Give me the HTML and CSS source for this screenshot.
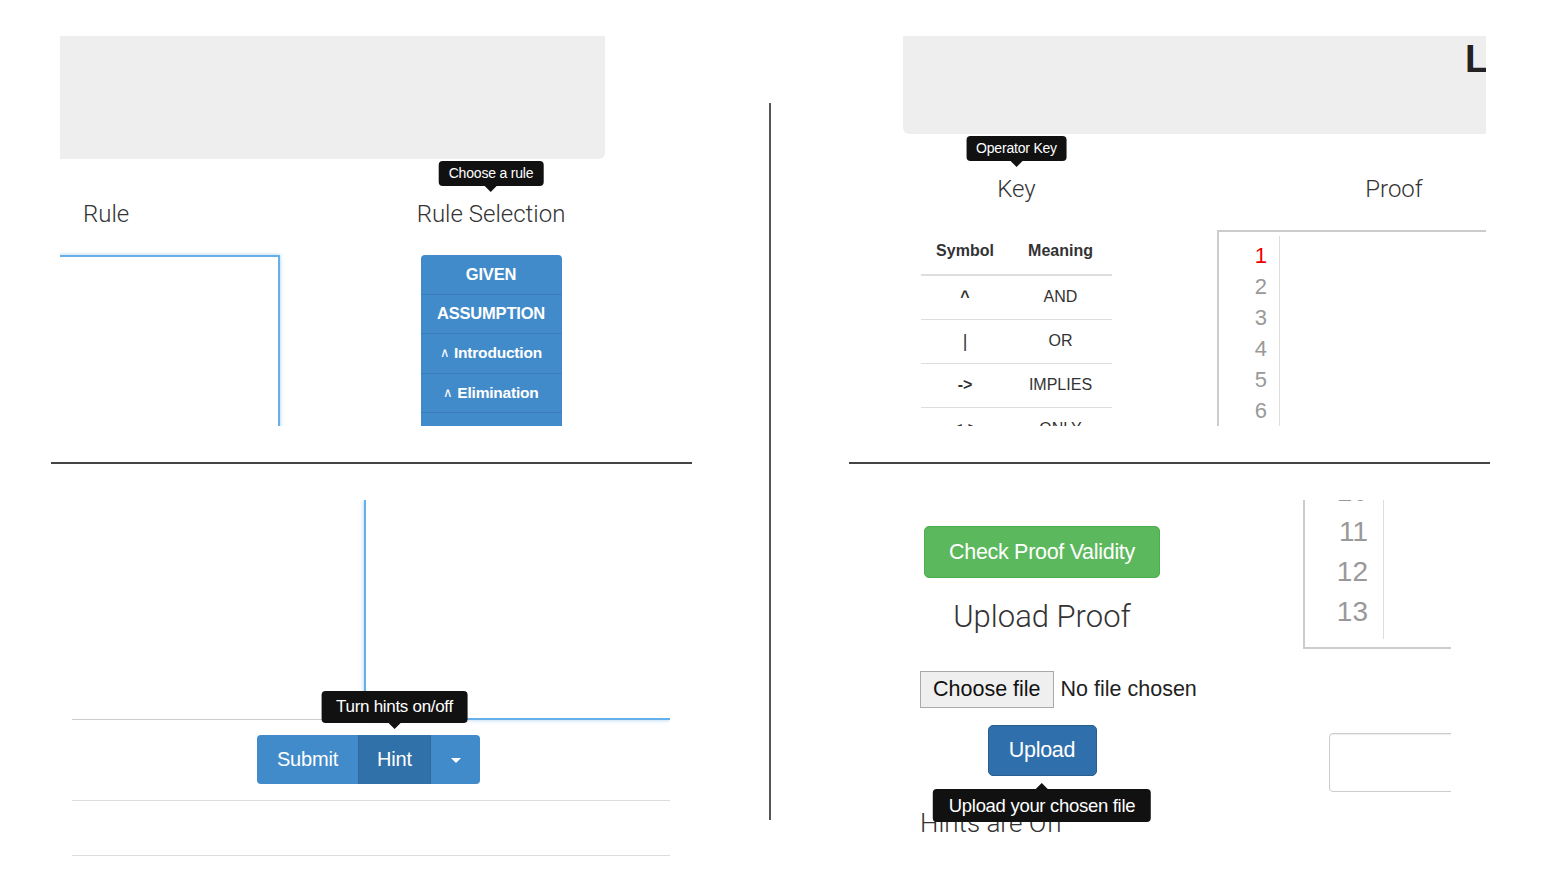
FILE: index.html
```html
<!DOCTYPE html>
<html lang="en">
<head>
<meta charset="utf-8">
<title>Proof Checker</title>
<link rel="stylesheet" href="styles.css">
</head>
<body>
<div class="sheet">
  <section class="col col-left">
    <div class="panel panel-tl">
      <div class="well well-tl"></div>
      <div class="tl-row">
        <div class="rule-col">
          <h3 class="heading heading-rule">Rule</h3>
          <div class="focus-box focus-box-tl"></div>
        </div>
        <div class="sel-col">
          <h3 class="heading heading-center"><span class="tip-anchor">Rule Selection<span class="tip tip-up tip-sm">Choose a rule</span></span></h3>
          <div class="rule-list">
            <button class="rule-btn rule-btn-caps">GIVEN</button>
            <button class="rule-btn rule-btn-caps">ASSUMPTION</button>
            <button class="rule-btn"><span class="wedge">∧</span> Introduction</button>
            <button class="rule-btn"><span class="wedge">∧</span> Elimination</button>
            <button class="rule-btn"><span class="wedge">∨</span> Introduction</button>
          </div>
        </div>
      </div>
    </div>
    <div class="rule-sep"></div>
    <div class="panel panel-bl">
      <div class="bl-top">
        <div class="bl-spacer"></div>
        <div class="focus-box focus-box-bl"></div>
      </div>
      <div class="btn-group">
        <button class="gbtn gbtn-submit">Submit</button>
        <button class="gbtn gbtn-hint">Hint<span class="tip tip-up tip-md">Turn hints on/off</span></button>
        <button class="gbtn gbtn-caret"><span class="caret"></span></button>
      </div>
      <div class="bl-line bl-line-1"></div>
      <div class="bl-line bl-line-2"></div>
    </div>
  </section>

  <div class="vdivider"></div>

  <section class="col col-right">
    <div class="panel panel-tr">
      <div class="well well-tr"><span class="title-cut">L</span></div>
      <div class="tr-row">
        <div class="key-col">
          <h3 class="heading heading-center"><span class="tip-anchor">Key<span class="tip tip-up tip-sm">Operator Key</span></span></h3>
          <table class="key-table">
            <thead>
              <tr><th class="c-sym">Symbol</th><th class="c-mean">Meaning</th></tr>
            </thead>
            <tbody>
              <tr><td class="sym">^</td><td>AND</td></tr>
              <tr><td class="sym sym-bar">|</td><td>OR</td></tr>
              <tr><td class="sym">-&gt;</td><td>IMPLIES</td></tr>
              <tr><td class="sym">&lt;-&gt;</td><td>ONLY</td></tr>
            </tbody>
          </table>
        </div>
        <div class="proof-col">
          <h3 class="heading heading-center">Proof</h3>
          <div class="editor editor-top">
            <div class="gutter gutter-top">
              <div class="ln ln-active">1</div>
              <div class="ln">2</div>
              <div class="ln">3</div>
              <div class="ln">4</div>
              <div class="ln">5</div>
              <div class="ln">6</div>
              <div class="ln">7</div>
            </div>
          </div>
        </div>
      </div>
    </div>
    <div class="rule-sep"></div>
    <div class="panel panel-br">
      <div class="br-left">
        <button class="btn-success">Check Proof Validity</button>
        <h3 class="upload-title">Upload Proof</h3>
        <div class="file-row">
          <span class="file-btn">Choose file</span>
          <span class="file-name">No file chosen</span>
        </div>
        <button class="btn-upload">Upload<span class="tip tip-down tip-lg">Upload your chosen file</span></button>
        <div class="hints-state">Hints are Off</div>
      </div>
      <div class="br-right">
        <div class="editor editor-bottom">
          <div class="gutter gutter-bottom">
            <div class="ln">10</div>
            <div class="ln">11</div>
            <div class="ln">12</div>
            <div class="ln">13</div>
          </div>
        </div>
        <div class="text-input"></div>
      </div>
    </div>
  </section>
</div>
</body>
</html>
```

FILE: styles.css
```css
* { box-sizing: border-box; }

html, body {
  margin: 0;
  padding: 0;
  background: #ffffff;
}

body {
  width: 1544px;
  height: 886px;
  overflow: hidden;
  font-family: "Liberation Sans", Arial, sans-serif;
  color: #333333;
}

button {
  font-family: "Liberation Sans", Arial, sans-serif;
  margin: 0;
  cursor: pointer;
}

.sheet {
  display: flex;
  align-items: flex-start;
  padding-top: 36px;
}

.col {
  width: 641px;
  flex-shrink: 0;
}

.col-left { margin-left: 51px; }
.col-right { margin-left: 78px; }

.vdivider {
  flex-shrink: 0;
  width: 2px;
  height: 717px;
  margin-left: 77px;
  margin-top: 67px;
  background: #555555;
}

.rule-sep {
  height: 2px;
  margin-top: 36px;
  background: #444444;
}

.panel {
  overflow: hidden;
  position: relative;
}

/* ---------- headings ---------- */
.heading {
  margin: 0;
  font-family: Roboto, "Liberation Sans", sans-serif;
  font-weight: 300;
  font-size: 24px;
  line-height: 28px;
  color: #333333;
  white-space: nowrap;
}

.heading-center { text-align: center; }

.tip-anchor {
  position: relative;
  display: inline-block;
}

/* ---------- tooltips ---------- */
.tip {
  position: absolute;
  left: 50%;
  transform: translateX(-50%);
  background: #111111;
  color: #ffffff;
  border-radius: 4px;
  white-space: nowrap;
  font-family: "Liberation Sans", Arial, sans-serif;
  font-weight: 400;
  z-index: 5;
  text-align: center;
}

.tip::after {
  content: "";
  position: absolute;
  left: 50%;
  margin-left: -6px;
  border: 6px solid transparent;
}

.tip-up::after {
  top: 100%;
  border-top-color: #111111;
  border-bottom-width: 0;
}

.tip-down::after {
  bottom: 100%;
  border-bottom-color: #111111;
  border-top-width: 0;
}

.tip-sm {
  bottom: calc(100% + 14px);
  font-size: 14px;
  line-height: 25px;
  height: 25px;
  padding: 0 10px;
  letter-spacing: -0.2px;
}

.tip-md {
  bottom: calc(100% + 12px);
  font-size: 17px;
  line-height: 32px;
  height: 32px;
  padding: 0 15px;
  letter-spacing: -0.3px;
}

.tip-lg {
  top: calc(100% + 14px);
  font-size: 18.5px;
  line-height: 33px;
  height: 33px;
  padding: 0 16px;
  letter-spacing: -0.3px;
}

/* ---------- top-left panel ---------- */
.panel-tl {
  margin-left: 9px;
  width: 632px;
  height: 390px;
}

.well {
  background: #eeeeee;
}

.well-tl {
  width: 545px;
  height: 123px;
  border-bottom-right-radius: 6px;
}

.tl-row {
  display: flex;
  margin-top: 41px;
}

.rule-col {
  width: 220px;
  flex-shrink: 0;
}

.heading-rule { padding-left: 23px; }

.focus-box {
  border-color: #66afe9;
  border-style: solid;
  border-width: 0;
  box-shadow: 0 0 4px rgba(102, 175, 233, 0.6);
}

.focus-box-tl {
  margin-top: 27px;
  margin-left: -10px;
  height: 220px;
  border-top-width: 2px;
  border-right-width: 2px;
}

.sel-col {
  width: 182px;
  margin-left: 120px;
  flex-shrink: 0;
}

.rule-list {
  width: 141px;
  margin: 27px auto 0;
  display: flex;
  flex-direction: column;
  border-radius: 4px 4px 0 0;
  overflow: hidden;
}

.rule-btn {
  height: 39.5px;
  border: 0;
  border-bottom: 1px solid #3a7dba;
  background: #428bca;
  color: #ffffff;
  font-weight: 700;
  font-size: 15.5px;
  padding: 0;
  text-align: center;
  letter-spacing: -0.2px;
}

.rule-btn-caps { font-size: 16.5px; }

.wedge {
  font-size: 13px;
  font-weight: 400;
  position: relative;
  top: -1px;
}

/* ---------- bottom-left panel ---------- */
.panel-bl {
  margin-top: 36px;
  margin-left: 21px;
  width: 598px;
  height: 358px;
}

.bl-top {
  display: flex;
  height: 220px;
}

.bl-spacer {
  width: 292px;
  flex-shrink: 0;
  border-bottom: 1px solid #cccccc;
}

.focus-box-bl {
  flex: 1;
  border-left-width: 2px;
  border-bottom-width: 2px;
}

.btn-group {
  display: flex;
  margin-top: 15px;
  margin-left: 185px;
  height: 49px;
}

.gbtn {
  height: 49px;
  border: 0;
  background: #428bca;
  color: #ffffff;
  font-size: 20px;
  padding: 0;
  position: relative;
  letter-spacing: -0.2px;
}

.gbtn-submit {
  width: 101px;
  border-radius: 4px 0 0 4px;
}

.gbtn-hint {
  width: 73px;
  background: #3071a9;
  border-left: 1px solid #2d6aa0;
  border-right: 1px solid #2d6aa0;
}

.gbtn-caret {
  width: 49px;
  border-radius: 0 4px 4px 0;
}

.caret {
  display: inline-block;
  width: 0;
  height: 0;
  border-left: 5px solid transparent;
  border-right: 5px solid transparent;
  border-top: 5px solid #ffffff;
  vertical-align: middle;
}

.bl-line {
  height: 1px;
  background: #dddddd;
}

.bl-line-1 { margin-top: 16px; }
.bl-line-2 { margin-top: 54px; }

/* ---------- top-right panel ---------- */
.panel-tr {
  margin-left: 54px;
  width: 583px;
  height: 390px;
}

.well-tr {
  height: 98px;
  border-bottom-left-radius: 6px;
  padding-left: 562px;
  padding-top: 1px;
  white-space: nowrap;
  overflow: hidden;
}

.title-cut {
  font-size: 38px;
  font-weight: 700;
  line-height: 44px;
  color: #222222;
}

.tr-row {
  display: flex;
  margin-top: 41px;
}

.key-col {
  width: 191px;
  margin-left: 18px;
  flex-shrink: 0;
}

.key-table {
  margin-top: 27px;
  width: 191px;
  border-collapse: collapse;
  font-size: 16px;
  color: #333333;
}

.key-table th {
  height: 45px;
  font-weight: 700;
  text-align: center;
  border-bottom: 2px solid #dddddd;
  padding: 0 0 2px;
}

.key-table th.c-sym { width: 88px; }

.key-table td {
  height: 44px;
  text-align: center;
  border-bottom: 1px solid #dddddd;
  padding: 0;
}

.key-table td.sym { font-weight: 700; }
.key-table td.sym-bar { font-weight: 400; font-size: 18px; }

.proof-col {
  width: 354px;
  margin-left: 105px;
  flex-shrink: 0;
}

.editor {
  border: 0 solid #cccccc;
}

.editor-top {
  margin-top: 27px;
  border-top-width: 2px;
  border-left-width: 2px;
  padding-top: 4px;
  height: 240px;
}

.gutter {
  border-right: 1px solid #dddddd;
  color: #999999;
  text-align: right;
}

.gutter-top {
  width: 61px;
  padding-right: 12px;
  padding-top: 4px;
  font-size: 22px;
  line-height: 31px;
}

.ln-active { color: #ee0000; }

/* ---------- bottom-right panel ---------- */
.panel-br {
  margin-top: 36px;
  width: 602px;
  height: 360px;
  display: flex;
  align-items: flex-start;
}

.br-left {
  width: 244px;
  margin-left: 71px;
  flex-shrink: 0;
  display: flex;
  flex-direction: column;
  align-items: center;
}

.btn-success {
  margin-top: 26px;
  height: 52px;
  width: 236px;
  padding: 0;
  border: 1px solid #4cae4c;
  border-radius: 5px;
  background: #5cb85c;
  color: #ffffff;
  font-size: 21.5px;
  letter-spacing: -0.3px;
}

.upload-title {
  margin: 21px 0 0;
  font-family: Roboto, "Liberation Sans", sans-serif;
  font-weight: 300;
  font-size: 31px;
  line-height: 36px;
  color: #333333;
  white-space: nowrap;
}

.file-row {
  align-self: flex-start;
  margin-top: 36px;
  display: flex;
  align-items: center;
  font-size: 21.5px;
  white-space: nowrap;
}

.file-btn {
  height: 37px;
  line-height: 35px;
  padding: 0 12px;
  background: #efefef;
  border: 1px solid #aaaaaa;
  color: #111111;
}

.file-name {
  margin-left: 7px;
  color: #222222;
}

.btn-upload {
  position: relative;
  margin-top: 17px;
  height: 51px;
  width: 109px;
  padding: 0;
  border: 1px solid #285e8e;
  border-radius: 5px;
  background: #2f6fab;
  color: #ffffff;
  font-size: 21.5px;
  letter-spacing: -0.3px;
}

.hints-state {
  align-self: flex-start;
  margin-top: 32px;
  font-family: Roboto, "Liberation Sans", sans-serif;
  font-weight: 300;
  font-size: 26px;
  line-height: 30px;
  color: #333333;
  white-space: nowrap;
}

.br-right {
  margin-left: 139px;
  width: 148px;
  flex-shrink: 0;
}

.editor-bottom {
  margin-top: -28px;
  border-left-width: 2px;
  border-bottom-width: 2px;
  padding-bottom: 8px;
}

.gutter-bottom {
  width: 79px;
  padding-right: 15px;
  padding-bottom: 7px;
  font-size: 28px;
  line-height: 40px;
}

.text-input {
  margin-top: 84px;
  margin-left: 26px;
  width: 200px;
  height: 59px;
  border: 1px solid #cccccc;
  border-radius: 4px;
  box-shadow: inset 0 1px 1px rgba(0, 0, 0, 0.075);
}
```
